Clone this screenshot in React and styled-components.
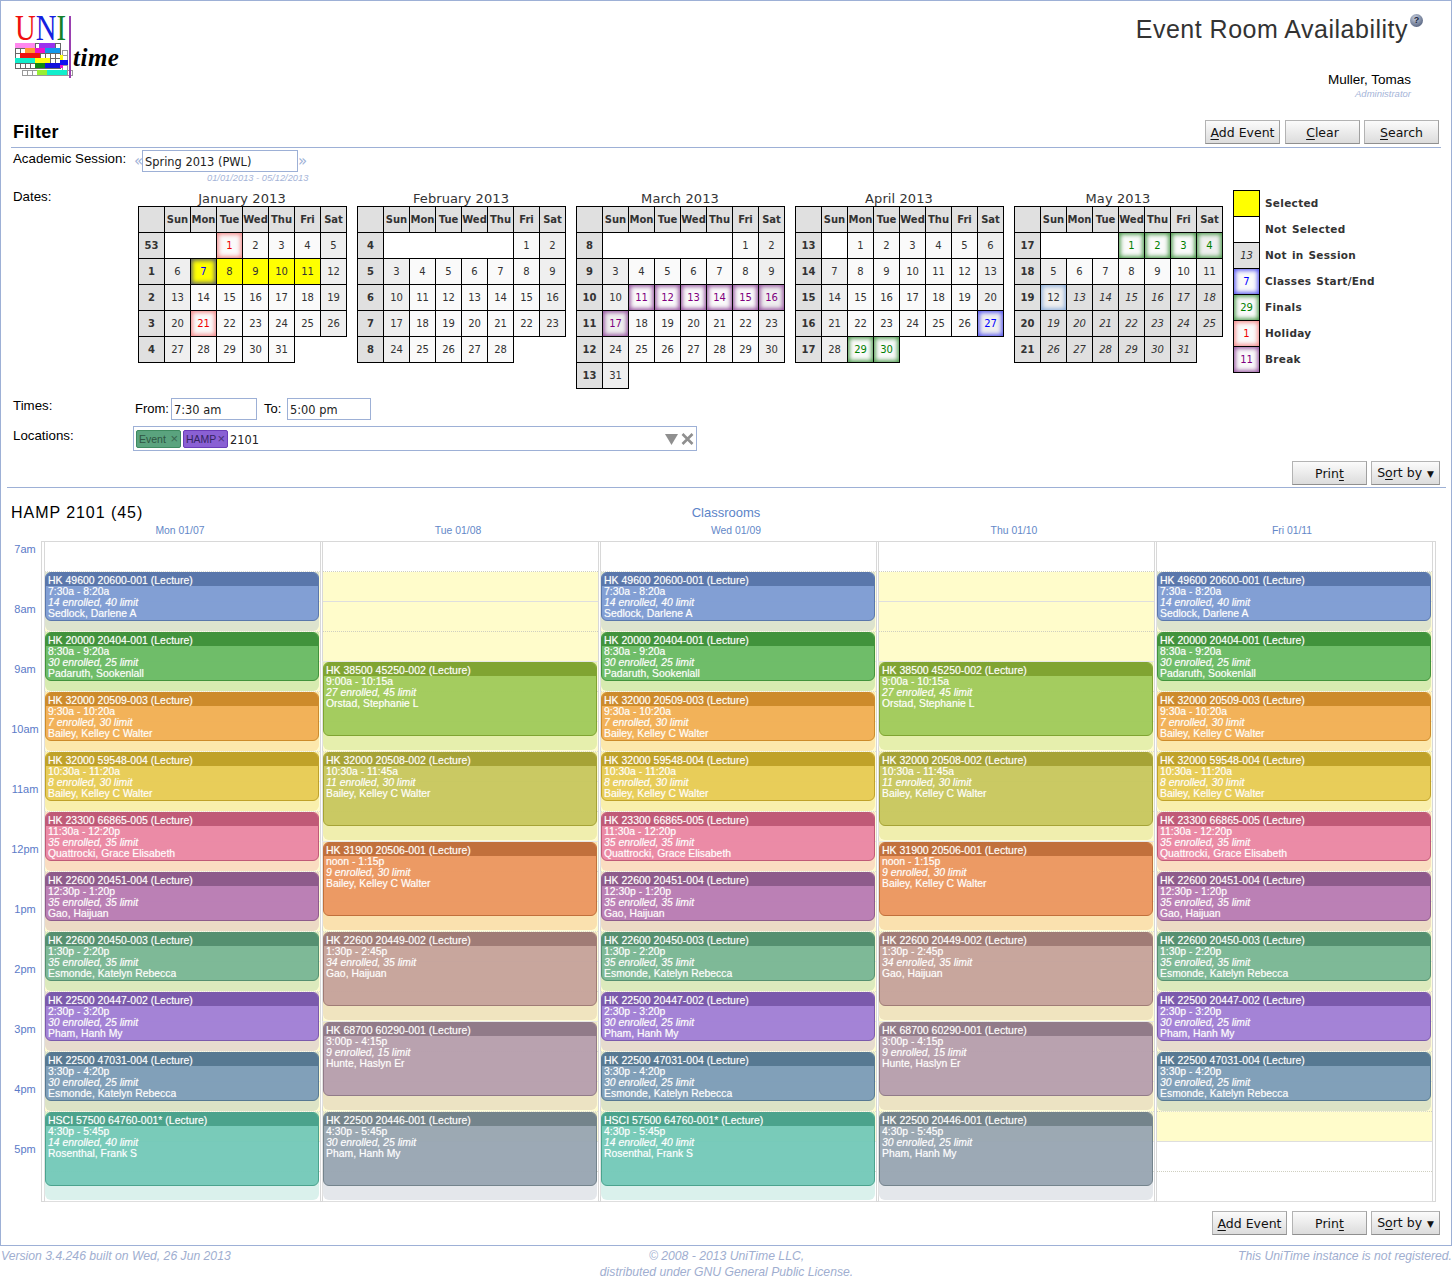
import React from "react";
import styled, { createGlobalStyle } from "styled-components";

const SANS = `"Liberation Sans", Arial, sans-serif`;
const WIDE = `"DejaVu Sans", Verdana, sans-serif`;

const GlobalStyle = createGlobalStyle`
  html, body {
    margin: 0;
    padding: 0;
    background: #fff;
  }
  body {
    font-family: ${SANS};
    color: #000;
  }
`;

const months = [
  { name: "January 2013", week: 53, lead: 2, days: 31, special: { 1: "holiday", 7: "start", 8: "selected", 9: "selected", 10: "selected", 11: "selected", 21: "holiday" } },
  { name: "February 2013", week: 4, lead: 5, days: 28, special: {} },
  { name: "March 2013", week: 8, lead: 5, days: 31, special: { 11: "break", 12: "break", 13: "break", 14: "break", 15: "break", 16: "break", 17: "break" } },
  { name: "April 2013", week: 13, lead: 1, days: 30, special: { 27: "classes", 29: "finals", 30: "finals" } },
  { name: "May 2013", week: 17, lead: 3, days: 31, special: { 1: "finals", 2: "finals", 3: "finals", 4: "finals", 12: "last" }, outFrom: 13 },
];

const dayNames = ["Sun", "Mon", "Tue", "Wed", "Thu", "Fri", "Sat"];

const kinds = {
  holiday: { glow: "#f58a8a", text: "#f00000" },
  finals: { glow: "#4d9a4d", text: "#008000" },
  break: { glow: "#96549f", text: "#800080" },
  classes: { glow: "#5555f0", text: "#0000ff" },
  last: { glow: "#8fb0dc", text: "#333" },
  start: { glow: "#5d6270", text: "#0000ff", bg: "#ffff00" },
  selected: { bg: "#ffff00", text: "#333" },
};

const legend = [
  { label: "Selected", bg: "#ffff00" },
  { label: "Not Selected", bg: "#fff" },
  { label: "Not in Session", text: "13", out: true },
  { label: "Classes Start/End", text: "7", kind: "classes" },
  { label: "Finals", text: "29", kind: "finals" },
  { label: "Holiday", text: "1", kind: "holiday" },
  { label: "Break", text: "11", kind: "break" },
];

const palette = {
  blue: ["#5472aa", "#7e9cd5"],
  green: ["#3a8f36", "#6abb66"],
  orange: ["#cb8725", "#f2b055"],
  gold: ["#be9e23", "#e8cc55"],
  pink: ["#bd5474", "#eb87a5"],
  plum: ["#8a5588", "#b97cb5"],
  sage: ["#4e8c6c", "#7ab795"],
  violet: ["#7654ab", "#a17fd7"],
  steel: ["#507490", "#7d9db9"],
  teal: ["#449f89", "#74cab9"],
  lime: ["#7ba12c", "#a1cb5b"],
  olive: ["#a39f30", "#c8c85f"],
  rust: ["#bf6b36", "#ec9761"],
  mauve: ["#9c7773", "#c6a39c"],
  dusk: ["#8d7686", "#b79fae"],
  slate: ["#6f7f88", "#99a6b3"],
};

const mwf = [
  { c: "blue", at: 30, title: "HK 49600 20600-001 (Lecture)", time: "7:30a - 8:20a", count: "14 enrolled, 40 limit", who: "Sedlock, Darlene A" },
  { c: "green", at: 90, title: "HK 20000 20404-001 (Lecture)", time: "8:30a - 9:20a", count: "30 enrolled, 25 limit", who: "Padaruth, Sookenlall" },
  { c: "orange", at: 150, title: "HK 32000 20509-003 (Lecture)", time: "9:30a - 10:20a", count: "7 enrolled, 30 limit", who: "Bailey, Kelley C Walter" },
  { c: "gold", at: 210, title: "HK 32000 59548-004 (Lecture)", time: "10:30a - 11:20a", count: "8 enrolled, 30 limit", who: "Bailey, Kelley C Walter" },
  { c: "pink", at: 270, title: "HK 23300 66865-005 (Lecture)", time: "11:30a - 12:20p", count: "35 enrolled, 35 limit", who: "Quattrocki, Grace Elisabeth" },
  { c: "plum", at: 330, title: "HK 22600 20451-004 (Lecture)", time: "12:30p - 1:20p", count: "35 enrolled, 35 limit", who: "Gao, Haijuan" },
  { c: "sage", at: 390, title: "HK 22600 20450-003 (Lecture)", time: "1:30p - 2:20p", count: "35 enrolled, 35 limit", who: "Esmonde, Katelyn Rebecca" },
  { c: "violet", at: 450, title: "HK 22500 20447-002 (Lecture)", time: "2:30p - 3:20p", count: "30 enrolled, 25 limit", who: "Pham, Hanh My" },
  { c: "steel", at: 510, title: "HK 22500 47031-004 (Lecture)", time: "3:30p - 4:20p", count: "30 enrolled, 25 limit", who: "Esmonde, Katelyn Rebecca" },
];

const hsci = { c: "teal", at: 570, long: true, title: "HSCI 57500 64760-001* (Lecture)", time: "4:30p - 5:45p", count: "14 enrolled, 40 limit", who: "Rosenthal, Frank S" };

const tth = [
  { c: "lime", at: 120, title: "HK 38500 45250-002 (Lecture)", time: "9:00a - 10:15a", count: "27 enrolled, 45 limit", who: "Orstad, Stephanie L" },
  { c: "olive", at: 210, title: "HK 32000 20508-002 (Lecture)", time: "10:30a - 11:45a", count: "11 enrolled, 30 limit", who: "Bailey, Kelley C Walter" },
  { c: "rust", at: 300, title: "HK 31900 20506-001 (Lecture)", time: "noon - 1:15p", count: "9 enrolled, 30 limit", who: "Bailey, Kelley C Walter" },
  { c: "mauve", at: 390, title: "HK 22600 20449-002 (Lecture)", time: "1:30p - 2:45p", count: "34 enrolled, 35 limit", who: "Gao, Haijuan" },
  { c: "dusk", at: 480, title: "HK 68700 60290-001 (Lecture)", time: "3:00p - 4:15p", count: "9 enrolled, 15 limit", who: "Hunte, Haslyn Er" },
  { c: "slate", at: 570, title: "HK 22500 20446-001 (Lecture)", time: "4:30p - 5:45p", count: "30 enrolled, 25 limit", who: "Pham, Hanh My" },
].map(e => ({ ...e, long: true }));

const days = [
  { label: "Mon 01/07", events: [...mwf, hsci] },
  { label: "Tue 01/08", events: tth },
  { label: "Wed 01/09", events: [...mwf, hsci] },
  { label: "Thu 01/10", events: tth },
  { label: "Fri 01/11", events: mwf },
];

const hours = ["7am", "8am", "9am", "10am", "11am", "12pm", "1pm", "2pm", "3pm", "4pm", "5pm"];
const slots = Array.from({ length: 22 }, (_, i) => i);

const Frame = styled.div`
  box-sizing: border-box;
  width: 1452px;
  height: 1246px;
  border: 1px solid #9db0d6;
`;

const Header = styled.header`
  height: 119px;
  display: flex;
  justify-content: space-between;
`;

const LogoArt = styled.svg`
  display: block;
  margin: 3px 0 0 13px;
`;

const HeaderRight = styled.div`
  display: flex;
  flex-direction: column;
  align-items: flex-end;
  padding-right: 28px;
`;

const TitleRow = styled.div`
  display: flex;
  align-items: flex-start;
  margin-top: 13px;
`;

const PageTitle = styled.h1`
  margin: 0;
  font: 400 25px/30px ${SANS};
  color: #333;
  letter-spacing: 0.5px;
`;

const HelpDot = styled.span`
  width: 13px;
  height: 13px;
  margin-left: 2px;
  border-radius: 50%;
  background: radial-gradient(circle at 40% 30%, #c5cede, #5d6a86 75%);
  color: #1d2740;
  font: 700 9px/13px ${SANS};
  text-align: center;
`;

const UserBlock = styled.div`
  margin: 28px 12px 0 0;
  text-align: right;
`;

const UserName = styled.div`
  font: 400 13.5px/16px ${SANS};
`;

const UserRole = styled.div`
  font: italic 400 9.5px/12px ${SANS};
  color: #a5b4d8;
`;

const SectionBar = styled.div`
  height: 27px;
  margin: 0 10px;
  padding-right: 2px;
  border-bottom: 1px solid #9db0d6;
  display: flex;
  justify-content: space-between;
  align-items: flex-start;
`;

const SectionTitle = styled.h2`
  margin: 0 0 0 2px;
  font: 700 18px/24px ${SANS};
  letter-spacing: 0.3px;
`;

const ButtonRow = styled.div`
  display: flex;
`;

const Button = styled.button`
  box-sizing: border-box;
  width: ${p => p.$w || 75}px;
  height: 24px;
  padding: 1px 0 0;
  margin-left: ${p => p.$gap || 0}px;
  border: 1px solid #b3b3b3;
  border-bottom-color: #8f8f8f;
  border-right-color: #a0a0a0;
  background: linear-gradient(#fbfbfb, #dcdcdc);
  font: 400 12.5px/20px ${WIDE};
  color: #111;
  u {
    text-underline-offset: 2px;
  }
`;

const Caret = styled.span`
  font-size: 9px;
  margin-left: 2px;
`;

const FormRow = styled.div`
  display: flex;
  margin-top: ${p => p.$top || 0}px;
  padding-left: 12px;
`;

const Label = styled.div`
  width: 120px;
  flex: none;
  font: 400 13.3px/16px ${SANS};
  margin-top: ${p => p.$shift || 0}px;
`;

const SessionRow = styled.div`
  display: flex;
  align-items: center;
  height: 22px;
  margin-left: 1px;
`;

const Chevron = styled.span`
  width: 8px;
  font: 400 15px/18px ${WIDE};
  color: #9db0d6;
  text-align: center;
`;

const Field = styled.div`
  box-sizing: border-box;
  width: ${p => p.$w}px;
  height: 22px;
  border: 1px solid #9db0d6;
  padding: 0 2px;
  font: 400 11.4px/23px ${WIDE};
  color: #222;
  white-space: nowrap;
`;

const DateNote = styled.div`
  height: 10px;
  margin: 1px 0 -1px 74px;
  font: italic 400 9.3px/10px ${SANS};
  color: #a5b4d8;
`;

const Calendars = styled.div`
  display: flex;
  gap: 11px;
  margin-left: 5px;
`;

const MonthTitle = styled.div`
  width: 208px;
  height: 16px;
  font: 400 13px/18px ${WIDE};
  letter-spacing: 0.1px;
  color: #333;
  text-align: center;
`;

const MonthGrid = styled.div`
  display: grid;
  grid-template-columns: repeat(8, 26px);
  grid-auto-rows: 26px;
`;

const Cell = styled.div`
  box-sizing: border-box;
  width: 27px;
  height: 27px;
  border: 1px solid #000;
  background: ${p => p.$bg || "#fafafa"};
  color: ${p => p.$color || "#333"};
  font: ${p => (p.$out ? "italic" : "normal")} ${p => (p.$bold ? 700 : 400)} 10px/25px ${WIDE};
  text-align: center;
  box-shadow: ${p => (p.$glow ? `inset 0 0 4px 1.5px ${p.$glow}` : "none")};
  overflow: hidden;
`;

const BlankCell = styled.div`
  box-sizing: border-box;
  width: 27px;
  height: 27px;
  border-top: 1px solid #000;
  border-bottom: 1px solid #000;
`;

const LegendList = styled.div`
  display: grid;
  grid-auto-rows: 26px;
`;

const LegendRow = styled.div`
  display: flex;
  align-items: flex-start;
  gap: 5px;
`;

const LegendText = styled.span`
  font: 700 10.5px/27px ${WIDE};
  letter-spacing: 0.3px;
  word-spacing: 1px;
  color: #333;
`;

const TimeRow = styled.div`
  display: flex;
  margin-left: 2px;
`;

const TimeLabel = styled.span`
  width: ${p => p.$w}px;
  font: 400 13px/22px ${SANS};
`;

const Spacer = styled.span`
  width: 7px;
`;

const LocationBox = styled.div`
  box-sizing: border-box;
  width: 564px;
  height: 25px;
  border: 1px solid #9db0d6;
  display: flex;
  align-items: center;
  gap: 2px;
  padding: 0 2px;
  font: 400 11.4px/16px ${WIDE};
  color: #222;
`;

const Chip = styled.span`
  box-sizing: border-box;
  display: flex;
  justify-content: space-between;
  width: ${p => p.$w}px;
  height: 18px;
  border: 1px solid ${p => p.$line};
  border-radius: 2px;
  background: ${p => p.$bg};
  color: ${p => p.$ink};
  font: 400 10.5px/17px ${SANS};
  padding: 0 2px;
  white-space: nowrap;
`;

const ChipClose = styled.span`
  font: 400 13px/15px ${SANS};
  opacity: 0.75;
`;

const TypedText = styled.span`
  padding-top: 2px;
`;

const BoxTools = styled.span`
  margin-left: auto;
  display: flex;
  gap: 3px;
  align-items: center;
`;

const ActionRow = styled.div`
  display: flex;
  justify-content: flex-end;
  margin-top: ${p => p.$top}px;
  padding-right: 11px;
`;

const Divider = styled.hr`
  height: 1px;
  border: 0;
  margin: 2px 5px 0 6px;
  background: #9db0d6;
`;

const ScheduleHead = styled.div`
  display: grid;
  grid-template-columns: 1fr auto 1fr;
  margin: 15px 10px 0;
  height: 17px;
  align-items: center;
`;

const RoomTitle = styled.div`
  font: 400 16px/17px ${SANS};
  letter-spacing: 0.95px;
`;

const RoomLink = styled.a`
  font: 400 13px/17px ${SANS};
  color: #5c84c8;
  margin-top: 1px;
`;

const DayHeads = styled.div`
  display: grid;
  grid-template-columns: repeat(5, 278px);
  margin: 5px 0 0 43px;
  height: 16px;
`;

const DayHead = styled.div`
  font: 400 10.4px/12px ${SANS};
  color: #6488c8;
  text-align: center;
  padding-right: 6px;
`;

const ScheduleBody = styled.div`
  display: flex;
`;

const TimeAxis = styled.div`
  width: 40px;
  flex: none;
  padding-top: 1px;
`;

const HourLabel = styled.div`
  height: 60px;
  box-sizing: border-box;
  padding-left: 8px;
  font: 400 11px/14px ${SANS};
  color: #5b7bc8;
  text-align: center;
  white-space: nowrap;
`;

const GridBox = styled.div`
  box-sizing: border-box;
  width: 1395px;
  height: 661px;
  padding-left: 2px;
  border: 1px solid #d8d8d8;
  display: grid;
  grid-template-columns: repeat(5, 278px);
`;

const DayColumn = styled.div`
  position: relative;
  width: 277px;
  height: 660px;
  box-sizing: border-box;
  border-left: 1px solid #d8d8d8;
  border-right: 1px solid #d8d8d8;
`;

const Slot = styled.div`
  box-sizing: border-box;
  height: 30px;
  background: ${p => (p.$session ? "#fffccb" : "#fff")};
  border-bottom: 1px ${p => (p.$hour ? "solid #dedede" : "dotted #cfcfc0")};
`;

const EventTint = styled.div`
  position: absolute;
  left: 0;
  width: 274px;
  border-radius: 0 0 6px 6px;
  background: ${p => p.$body}44;
  box-shadow: 0 0 0 1px #ffffff44;
`;

const EventBox = styled.div`
  position: absolute;
  left: 0;
  width: 274px;
  box-sizing: border-box;
  border: 1px solid ${p => p.$head};
  border-radius: 6px;
  background: ${p => p.$body};
  overflow: hidden;
  opacity: 0.95;
  color: #fff;
  font: 400 10.4px/11px ${SANS};
  text-shadow: 0 0 1px rgba(255, 255, 255, 0.55);
`;

const EventHead = styled.div`
  height: 11px;
  margin-top: -1px;
  padding: 3px 2px 0;
  background: ${p => p.$head};
  font-size: 10.5px;
  white-space: nowrap;
`;

const EventLine = styled.div`
  padding: 0 2px;
  height: 11px;
  white-space: nowrap;
  font-style: ${p => (p.$italic ? "italic" : "normal")};
`;

const Footer = styled.footer`
  display: grid;
  grid-template-columns: 1fr auto 1fr;
  font: italic 400 12.2px/16px ${SANS};
  color: #a0aed0;
  padding: 2px 0 0 1px;
`;

const FooterMid = styled.div`
  text-align: center;
`;

const FooterRight = styled.div`
  text-align: right;
`;

const Logo = () => {
  const bars = [
    ["#ff88ee", 1, 27, 20, 5], ["#9933ee", 25, 27, 16, 5],
    ["#ff9933", 11, 32, 10, 5], ["#ee11cc", 21, 32, 10, 5], ["#1199ee", 31, 32, 15, 5],
    ["#ee1111", 6, 37, 20, 5], ["#11eecc", 1, 42, 20, 5], ["#ffff11", 21, 42, 15, 5],
    ["#118811", 21, 47, 10, 5], ["#1111dd", 31, 47, 15, 5],
    ["#ffff11", 46, 39, 3, 5], ["#1111ee", 46, 44, 8, 5], ["#ee11cc", 46, 49, 3, 3],
    ["#99ee33", 23, 54, 10, 5], ["#11eecc", 33, 54, 20, 5],
  ];
  const front = [];
  for (let y = 27; y < 52; y += 5) for (let x = 1; x < 46; x += 5) front.push([x, y]);
  const back = [];
  for (let x = 8; x < 54; x += 5) back.push([x, 54]);
  for (let y = 34; y < 54; y += 5) back.push([48, y]);
  return (
    <LogoArt width="110" height="76" viewBox="0 -12 110 76">
      {back.map(([x, y], i) => <rect key={"b" + i} x={x + 0.5} y={y + 0.5} width="5" height="5" fill="#fff" stroke="#999" />)}
      {front.map(([x, y], i) => <rect key={"f" + i} x={x + 0.5} y={y + 0.5} width="5" height="5" fill="#fff" stroke="#666" />)}
      {bars.map(([c, x, y, w, h], i) => <rect key={i} x={x} y={y} width={w} height={h} fill={c} />)}
      <text transform="translate(1 24) scale(0.82 1)" fontFamily="Liberation Serif, serif" fontSize="35">
        <tspan fill="#f01010">U</tspan>
        <tspan fill="#1420e0">N</tspan>
        <tspan fill="#14802a">I</tspan>
      </text>
      <rect x="55" y="0" width="2" height="62" fill="#9a3fb0" />
      <text x="59" y="50" fontFamily="Liberation Serif, serif" fontStyle="italic" fontWeight="700" fontSize="25" fill="#000" letterSpacing="0.5">time</text>
    </LogoArt>
  );
};

const Month = ({ month }) => {
  const cells = [];
  const total = month.lead + month.days;
  const rows = Math.ceil(total / 7);
  for (let r = 0; r < rows; r++) {
    cells.push(<Cell key={"w" + r} $bg="#e0e0e0" $bold>{month.week === 53 && r > 0 ? r : month.week + r}</Cell>);
    for (let c = 0; c < 7; c++) {
      const n = r * 7 + c - month.lead + 1;
      if (n < 1) {
        cells.push(<BlankCell key={"e" + c} />);
      } else if (n <= month.days) {
        const kind = kinds[month.special[n]];
        const out = month.outFrom && n >= month.outFrom;
        const weekend = c === 0 || c === 6;
        cells.push(
          <Cell
            key={n}
            $out={out}
            $bg={out ? "#e0e0e0" : kind?.bg || (weekend ? "#efefef" : "#fafafa")}
            $color={kind?.text}
            $glow={kind?.glow}
          >
            {n}
          </Cell>
        );
      }
    }
  }
  return (
    <div>
      <MonthTitle>{month.name}</MonthTitle>
      <MonthGrid>
        <Cell $bg="#e0e0e0" />
        {dayNames.map(d => <Cell key={d} $bg="#e0e0e0" $bold>{d}</Cell>)}
        {cells}
      </MonthGrid>
    </div>
  );
};

const Legend = () => (
  <LegendList>
    {legend.map(item => {
      const kind = kinds[item.kind];
      return (
        <LegendRow key={item.label}>
          <Cell $bg={item.out ? "#e0e0e0" : item.bg} $out={item.out} $color={kind?.text} $glow={kind?.glow}>{item.text}</Cell>
          <LegendText>{item.label}</LegendText>
        </LegendRow>
      );
    })}
  </LegendList>
);

const CalEvent = ({ e }) => {
  const [head, body] = palette[e.c];
  const h = e.long ? 74 : 49;
  const tint = e.long ? 88 : 59;
  return (
    <>
      <EventTint $body={body} style={{ top: e.at, height: tint }} />
      <EventBox $head={head} $body={body} style={{ top: e.at, height: h }}>
        <EventHead $head={head}>{e.title}</EventHead>
        <EventLine>{e.time}</EventLine>
        <EventLine $italic>{e.count}</EventLine>
        <EventLine>{e.who}</EventLine>
      </EventBox>
    </>
  );
};

export default function App() {
  return (
    <>
      <GlobalStyle />
      <Frame>
        <Header>
          <Logo />
          <HeaderRight>
            <TitleRow>
              <PageTitle>Event Room Availability</PageTitle>
              <HelpDot>?</HelpDot>
            </TitleRow>
            <UserBlock>
              <UserName>Muller, Tomas</UserName>
              <UserRole>Administrator</UserRole>
            </UserBlock>
          </HeaderRight>
        </Header>

        <SectionBar>
          <SectionTitle>Filter</SectionTitle>
          <ButtonRow>
            <Button><u>A</u>dd Event</Button>
            <Button $gap={5}><u>C</u>lear</Button>
            <Button $gap={4}><u>S</u>earch</Button>
          </ButtonRow>
        </SectionBar>

        <FormRow $top={2}>
          <Label $shift={1}>Academic Session:</Label>
          <div>
            <SessionRow>
              <Chevron>«</Chevron>
              <Field $w={156}>Spring 2013 (PWL)</Field>
              <Chevron>»</Chevron>
            </SessionRow>
            <DateNote>01/01/2013 - 05/12/2013</DateNote>
          </div>
        </FormRow>

        <FormRow $top={8}>
          <Label $shift={-1}>Dates:</Label>
          <Calendars>
            {months.map(m => <Month key={m.name} month={m} />)}
            <Legend />
          </Calendars>
        </FormRow>

        <FormRow $top={10}>
          <Label>Times:</Label>
          <TimeRow>
            <TimeLabel $w={36}>From:</TimeLabel>
            <Field $w={86}>7:30 am</Field>
            <Spacer />
            <TimeLabel $w={23}>To:</TimeLabel>
            <Field $w={84}>5:00 pm</Field>
          </TimeRow>
        </FormRow>

        <FormRow $top={6}>
          <Label $shift={2}>Locations:</Label>
          <LocationBox>
            <Chip $w={45} $bg="#5aa37e" $line="#3e8a60" $ink="#2e5442">Event<ChipClose>×</ChipClose></Chip>
            <Chip $w={45} $bg="#8a60d4" $line="#6a3db8" $ink="#35245f">HAMP<ChipClose>×</ChipClose></Chip>
            <TypedText>2101</TypedText>
            <BoxTools>
              <svg width="13" height="12" viewBox="0 0 13 12"><path d="M0 1h13L6.5 12z" fill="#8f8f8f" /></svg>
              <svg width="13" height="12" viewBox="0 0 13 12"><path d="M1.5 1l10 10M11.5 1l-10 10" stroke="#8f8f8f" strokeWidth="2.6" /></svg>
            </BoxTools>
          </LocationBox>
        </FormRow>

        <ActionRow $top={10}>
          <Button><span>Prin<u>t</u></span></Button>
          <Button $w={69} $gap={4}>S<u>o</u>rt by<Caret> ▼</Caret></Button>
        </ActionRow>

        <Divider />

        <ScheduleHead>
          <RoomTitle>HAMP 2101 (45)</RoomTitle>
          <RoomLink>Classrooms</RoomLink>
          <span />
        </ScheduleHead>

        <DayHeads>
          {days.map(d => <DayHead key={d.label}>{d.label}</DayHead>)}
        </DayHeads>

        <ScheduleBody>
          <TimeAxis>
            {hours.map(h => <HourLabel key={h}>{h}</HourLabel>)}
          </TimeAxis>
          <GridBox>
            {days.map(d => (
              <DayColumn key={d.label}>
                {slots.map(i => <Slot key={i} $session={i >= 1 && i <= 19} $hour={i % 2 === 1} />)}
                {d.events.map(e => <CalEvent key={e.title} e={e} />)}
              </DayColumn>
            ))}
          </GridBox>
        </ScheduleBody>

        <ActionRow $top={9}>
          <Button><u>A</u>dd Event</Button>
          <Button $gap={5}><span>Prin<u>t</u></span></Button>
          <Button $w={69} $gap={4}>S<u>o</u>rt by<Caret> ▼</Caret></Button>
        </ActionRow>
      </Frame>

      <Footer>
        <div>Version 3.4.246 built on Wed, 26 Jun 2013</div>
        <FooterMid>© 2008 - 2013 UniTime LLC,<br />distributed under GNU General Public License.</FooterMid>
        <FooterRight>This UniTime instance is not registered.</FooterRight>
      </Footer>
    </>
  );
}
